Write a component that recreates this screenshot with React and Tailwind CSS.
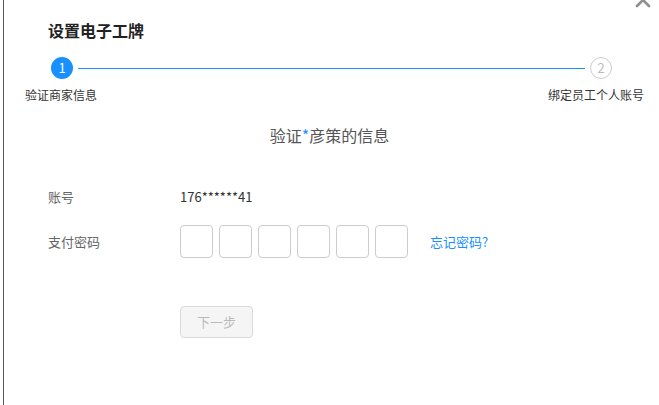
import React from 'react';

const font = { fontFamily: '"Noto Sans CJK SC", "Noto Sans", sans-serif' };

const App = () => {
  const boxes = [0, 1, 2, 3, 4, 5];

  return (
    <div className="w-[659px] h-[405px] bg-white overflow-hidden relative" style={font}>
      <div className="absolute left-[3px] top-0 bottom-0 w-px bg-[#5a5a5a]" />
      <svg className="absolute right-[8px] top-[-8px]" width="16" height="16" viewBox="0 0 16 16">
        <path d="M2 2 L14 14 M14 2 L2 14" stroke="#8f8f8f" strokeWidth="2.6" strokeLinecap="round" />
      </svg>

      <div className="pt-[19px] pl-[48px] text-[16px] leading-[22px] font-bold text-[#222]">设置电子工牌</div>

      <div className="flex items-center mt-[16px] pl-[51px] pr-[47px]">
        <div className="w-[22px] h-[22px] rounded-full bg-[#1890ff] text-white text-[13px] flex items-center justify-center">1</div>
        <div className="flex-1 h-px bg-[#1890ff] ml-[5px] mr-[5px]" />
        <div className="w-[22px] h-[22px] rounded-full border border-[#ccc] text-[#bbb] text-[13px] flex items-center justify-center">2</div>
      </div>

      <div className="flex justify-between mt-[8px] pl-[25px] pr-[15px] text-[12px] leading-[16px] text-[#333]">
        <span>验证商家信息</span>
        <span>绑定员工个人账号</span>
      </div>

      <div className="mt-[22px] text-center text-[16px] leading-[20px] text-[#555]">
        验证<span className="text-[#1890ff]">*</span>彦策的信息
      </div>

      <div className="mt-[42px] pl-[48px] flex items-center text-[13px] leading-[20px]">
        <span className="w-[132px] text-[#666]">账号</span>
        <span className="text-[#333]">176******41</span>
      </div>

      <div className="mt-[18px] pl-[48px] flex items-center text-[13px]">
        <span className="w-[132px] text-[#666]">支付密码</span>
        <div className="flex gap-[6px]">
          {boxes.map((b) => (
            <div key={b} className="w-[33px] h-[33px] border border-[#ccc] rounded-[4px]" />
          ))}
        </div>
        <span className="ml-[22px] text-[#1890ff]">忘记密码?</span>
      </div>

      <div className="mt-[48px] pl-[180px]">
        <button
          type="button"
          disabled
          className="w-[73px] h-[32px] rounded-[4px] border border-[#d9d9d9] bg-[#f5f5f5] text-[#bbb] text-[13px]"
        >
          下一步
        </button>
      </div>
    </div>
  );
};

export default App;
